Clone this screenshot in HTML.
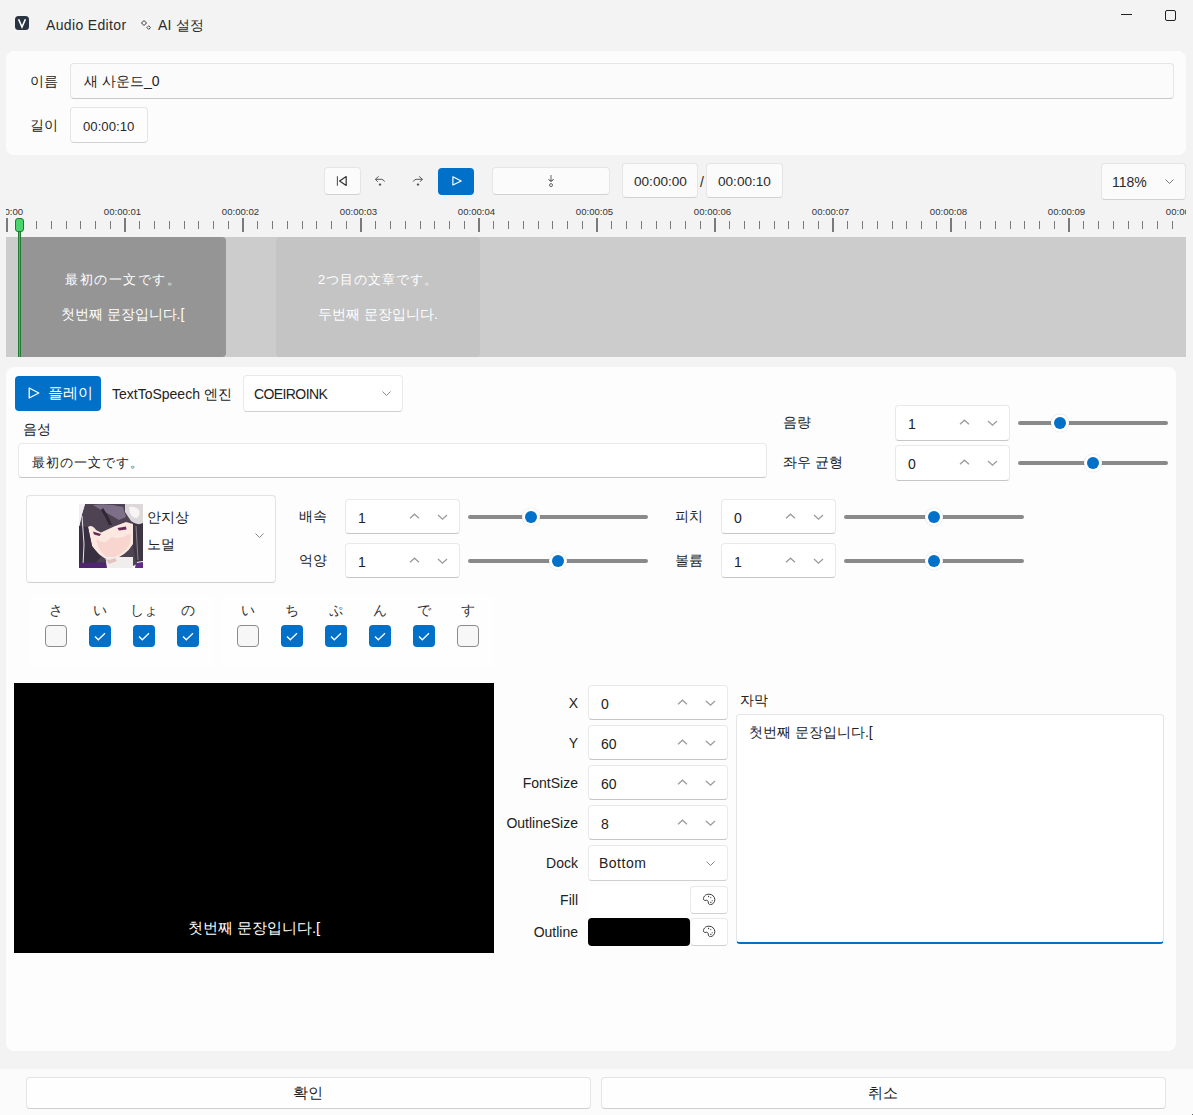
<!DOCTYPE html>
<html><head><meta charset="utf-8">
<style>
*{box-sizing:border-box;margin:0;padding:0}
html,body{width:1193px;height:1115px;overflow:hidden;background:#f3f3f3;font-family:"Liberation Sans",sans-serif;color:#222;font-size:14px}
.a{position:absolute}
.card{position:absolute;background:#fcfcfc;border-radius:8px}
.inp{position:absolute;background:#fbfbfb;border:1px solid #e5e5e5;border-bottom-color:#c9c9c9;border-radius:4px}
.btn{position:absolute;background:#fbfbfb;border:1px solid #e5e5e5;border-bottom-color:#d2d2d2;border-radius:4px}
.t{position:absolute;white-space:nowrap;line-height:1}
.acc{position:absolute;background:#0070c8;border-radius:4px}
svg{position:absolute;overflow:visible}
</style></head><body>
<!-- title bar -->
<div class="a" style="left:15px;top:16px;width:14px;height:14px;background:#2a3441;border-radius:3.5px"></div>
<svg style="left:15px;top:16px" width="14" height="14" viewBox="0 0 14 14"><path d="M3.6 3.2L7 11L10.4 3.2" fill="none" stroke="#fff" stroke-width="1.6" stroke-linejoin="miter"/></svg>
<div class="t" style="left:46px;top:18px;font-size:14px;color:#2b2b2b;letter-spacing:0.35px">Audio Editor</div>
<svg style="left:140px;top:19px" width="13" height="12" viewBox="0 0 13 12"><path d="M4 1.5L6.5 4L4 6.5L1.5 4Z" fill="none" stroke="#333" stroke-width="1"/><path d="M8.7 6.8L10.5 8.6L8.7 10.4L6.9 8.6Z" fill="none" stroke="#333" stroke-width="0.9"/></svg>
<div class="t" style="left:158px;top:18px;font-size:14px;color:#2b2b2b;letter-spacing:0.2px">AI 설정</div>
<div class="a" style="left:1121px;top:14px;width:11px;height:1px;background:#222"></div>
<div class="a" style="left:1165px;top:10px;width:11px;height:11px;border:1px solid #222;border-radius:2px"></div>

<!-- card 1 -->
<div class="card" style="left:6px;top:51px;width:1180px;height:104px"></div>
<div class="t" style="left:30px;top:74px;font-size:14px">이름</div>
<div class="inp" style="left:70px;top:63px;width:1104px;height:36px"></div>
<div class="t" style="left:84px;top:74px;font-size:14px">새 사운드_0</div>
<div class="t" style="left:30px;top:118px;font-size:14px">길이</div>
<div class="btn" style="left:70px;top:107px;width:78px;height:36px;background:#fdfdfd"></div>
<div class="t" style="left:83px;top:120px;font-size:13.2px;color:#2a2a2a">00:00:10</div>


<!-- transport -->
<div class="btn" style="left:324px;top:167px;width:37px;height:28px"></div>
<svg style="left:330px;top:170px" width="24" height="22" viewBox="330 170 24 22"><path d="M337.4 176.2V185.8" stroke="#555" stroke-width="1.1"/><path d="M346.2 176.6L339.6 181L346.2 185.4Z" fill="none" stroke="#333" stroke-width="1.2" stroke-linejoin="round"/></svg>
<svg style="left:370px;top:170px" width="60" height="22" viewBox="370 170 60 22"><path d="M378.6 176.4L375.4 179.3L377.8 181.8M375.4 179.3H381.6Q383.2 179.3 384.6 181.6" fill="none" stroke="#555" stroke-width="1"/><ellipse cx="380" cy="184.6" rx="1.3" ry="1.1" fill="#555"/><path d="M419.2 176.4L422.4 179.3L420 181.8M422.4 179.3H416.2Q414.6 179.3 413.2 181.6" fill="none" stroke="#555" stroke-width="1"/><ellipse cx="418" cy="184.6" rx="1.3" ry="1.1" fill="#555"/></svg>
<div class="acc" style="left:438px;top:168px;width:36px;height:27px"></div>
<svg style="left:444px;top:170px" width="24" height="22" viewBox="444 170 24 22"><path d="M452.9 176.8V185L461.2 181Z" fill="none" stroke="#fff" stroke-width="1.2" stroke-linejoin="round"/></svg>
<div class="btn" style="left:492px;top:167px;width:118px;height:28px"></div>
<svg style="left:540px;top:170px" width="22" height="22" viewBox="540 170 22 22"><path d="M551 175V181.2" stroke="#888" stroke-width="1.3"/><path d="M548.5 179.4L551 181.4L553.6 179.4" fill="none" stroke="#333" stroke-width="1"/><circle cx="551" cy="185.1" r="1.5" fill="none" stroke="#555" stroke-width="0.9"/></svg>
<div class="btn" style="left:622px;top:163px;width:76px;height:35px"></div>
<div class="t" style="left:634px;top:175px;font-size:13.6px;color:#2a2a2a">00:00:00</div>
<div class="t" style="left:700px;top:175px;font-size:14px;color:#2a2a2a">/</div>
<div class="btn" style="left:706px;top:163px;width:77px;height:35px"></div>
<div class="t" style="left:718px;top:175px;font-size:13.6px;color:#2a2a2a">00:00:10</div>
<div class="btn" style="left:1101px;top:163px;width:85px;height:37px"></div>
<div class="t" style="left:1112px;top:175px;font-size:14px;color:#2a2a2a">118%</div>
<svg style="left:1165px;top:179px" width="9" height="5" viewBox="0 0 9 5"><path d="M0.5 0.5L4.5 4.5L8.5 0.5" fill="none" stroke="#777" stroke-width="1"/></svg>

<!-- ruler -->
<div class="a" style="left:6px;top:200px;width:1180px;height:35px;overflow:hidden">
<div class="a" style="left:0.00px;top:18px;width:2px;height:14px;background:#7a7a7a"></div>
<div class="a" style="left:15.25px;top:21px;width:1px;height:8px;background:#7a7a7a"></div>
<div class="a" style="left:30.00px;top:21px;width:1px;height:8px;background:#7a7a7a"></div>
<div class="a" style="left:44.75px;top:21px;width:1px;height:8px;background:#7a7a7a"></div>
<div class="a" style="left:59.50px;top:21px;width:1px;height:8px;background:#7a7a7a"></div>
<div class="a" style="left:74.25px;top:21px;width:1px;height:8px;background:#7a7a7a"></div>
<div class="a" style="left:89.00px;top:21px;width:1px;height:8px;background:#7a7a7a"></div>
<div class="a" style="left:103.75px;top:21px;width:1px;height:8px;background:#7a7a7a"></div>
<div class="t" style="left:-26.50px;top:7px;width:50px;text-align:center;font-size:9.6px;color:#333">00:00:00</div>
<div class="a" style="left:118.00px;top:18px;width:2px;height:14px;background:#7a7a7a"></div>
<div class="a" style="left:133.25px;top:21px;width:1px;height:8px;background:#7a7a7a"></div>
<div class="a" style="left:148.00px;top:21px;width:1px;height:8px;background:#7a7a7a"></div>
<div class="a" style="left:162.75px;top:21px;width:1px;height:8px;background:#7a7a7a"></div>
<div class="a" style="left:177.50px;top:21px;width:1px;height:8px;background:#7a7a7a"></div>
<div class="a" style="left:192.25px;top:21px;width:1px;height:8px;background:#7a7a7a"></div>
<div class="a" style="left:207.00px;top:21px;width:1px;height:8px;background:#7a7a7a"></div>
<div class="a" style="left:221.75px;top:21px;width:1px;height:8px;background:#7a7a7a"></div>
<div class="t" style="left:91.50px;top:7px;width:50px;text-align:center;font-size:9.6px;color:#333">00:00:01</div>
<div class="a" style="left:236.00px;top:18px;width:2px;height:14px;background:#7a7a7a"></div>
<div class="a" style="left:251.25px;top:21px;width:1px;height:8px;background:#7a7a7a"></div>
<div class="a" style="left:266.00px;top:21px;width:1px;height:8px;background:#7a7a7a"></div>
<div class="a" style="left:280.75px;top:21px;width:1px;height:8px;background:#7a7a7a"></div>
<div class="a" style="left:295.50px;top:21px;width:1px;height:8px;background:#7a7a7a"></div>
<div class="a" style="left:310.25px;top:21px;width:1px;height:8px;background:#7a7a7a"></div>
<div class="a" style="left:325.00px;top:21px;width:1px;height:8px;background:#7a7a7a"></div>
<div class="a" style="left:339.75px;top:21px;width:1px;height:8px;background:#7a7a7a"></div>
<div class="t" style="left:209.50px;top:7px;width:50px;text-align:center;font-size:9.6px;color:#333">00:00:02</div>
<div class="a" style="left:354.00px;top:18px;width:2px;height:14px;background:#7a7a7a"></div>
<div class="a" style="left:369.25px;top:21px;width:1px;height:8px;background:#7a7a7a"></div>
<div class="a" style="left:384.00px;top:21px;width:1px;height:8px;background:#7a7a7a"></div>
<div class="a" style="left:398.75px;top:21px;width:1px;height:8px;background:#7a7a7a"></div>
<div class="a" style="left:413.50px;top:21px;width:1px;height:8px;background:#7a7a7a"></div>
<div class="a" style="left:428.25px;top:21px;width:1px;height:8px;background:#7a7a7a"></div>
<div class="a" style="left:443.00px;top:21px;width:1px;height:8px;background:#7a7a7a"></div>
<div class="a" style="left:457.75px;top:21px;width:1px;height:8px;background:#7a7a7a"></div>
<div class="t" style="left:327.50px;top:7px;width:50px;text-align:center;font-size:9.6px;color:#333">00:00:03</div>
<div class="a" style="left:472.00px;top:18px;width:2px;height:14px;background:#7a7a7a"></div>
<div class="a" style="left:487.25px;top:21px;width:1px;height:8px;background:#7a7a7a"></div>
<div class="a" style="left:502.00px;top:21px;width:1px;height:8px;background:#7a7a7a"></div>
<div class="a" style="left:516.75px;top:21px;width:1px;height:8px;background:#7a7a7a"></div>
<div class="a" style="left:531.50px;top:21px;width:1px;height:8px;background:#7a7a7a"></div>
<div class="a" style="left:546.25px;top:21px;width:1px;height:8px;background:#7a7a7a"></div>
<div class="a" style="left:561.00px;top:21px;width:1px;height:8px;background:#7a7a7a"></div>
<div class="a" style="left:575.75px;top:21px;width:1px;height:8px;background:#7a7a7a"></div>
<div class="t" style="left:445.50px;top:7px;width:50px;text-align:center;font-size:9.6px;color:#333">00:00:04</div>
<div class="a" style="left:590.00px;top:18px;width:2px;height:14px;background:#7a7a7a"></div>
<div class="a" style="left:605.25px;top:21px;width:1px;height:8px;background:#7a7a7a"></div>
<div class="a" style="left:620.00px;top:21px;width:1px;height:8px;background:#7a7a7a"></div>
<div class="a" style="left:634.75px;top:21px;width:1px;height:8px;background:#7a7a7a"></div>
<div class="a" style="left:649.50px;top:21px;width:1px;height:8px;background:#7a7a7a"></div>
<div class="a" style="left:664.25px;top:21px;width:1px;height:8px;background:#7a7a7a"></div>
<div class="a" style="left:679.00px;top:21px;width:1px;height:8px;background:#7a7a7a"></div>
<div class="a" style="left:693.75px;top:21px;width:1px;height:8px;background:#7a7a7a"></div>
<div class="t" style="left:563.50px;top:7px;width:50px;text-align:center;font-size:9.6px;color:#333">00:00:05</div>
<div class="a" style="left:708.00px;top:18px;width:2px;height:14px;background:#7a7a7a"></div>
<div class="a" style="left:723.25px;top:21px;width:1px;height:8px;background:#7a7a7a"></div>
<div class="a" style="left:738.00px;top:21px;width:1px;height:8px;background:#7a7a7a"></div>
<div class="a" style="left:752.75px;top:21px;width:1px;height:8px;background:#7a7a7a"></div>
<div class="a" style="left:767.50px;top:21px;width:1px;height:8px;background:#7a7a7a"></div>
<div class="a" style="left:782.25px;top:21px;width:1px;height:8px;background:#7a7a7a"></div>
<div class="a" style="left:797.00px;top:21px;width:1px;height:8px;background:#7a7a7a"></div>
<div class="a" style="left:811.75px;top:21px;width:1px;height:8px;background:#7a7a7a"></div>
<div class="t" style="left:681.50px;top:7px;width:50px;text-align:center;font-size:9.6px;color:#333">00:00:06</div>
<div class="a" style="left:826.00px;top:18px;width:2px;height:14px;background:#7a7a7a"></div>
<div class="a" style="left:841.25px;top:21px;width:1px;height:8px;background:#7a7a7a"></div>
<div class="a" style="left:856.00px;top:21px;width:1px;height:8px;background:#7a7a7a"></div>
<div class="a" style="left:870.75px;top:21px;width:1px;height:8px;background:#7a7a7a"></div>
<div class="a" style="left:885.50px;top:21px;width:1px;height:8px;background:#7a7a7a"></div>
<div class="a" style="left:900.25px;top:21px;width:1px;height:8px;background:#7a7a7a"></div>
<div class="a" style="left:915.00px;top:21px;width:1px;height:8px;background:#7a7a7a"></div>
<div class="a" style="left:929.75px;top:21px;width:1px;height:8px;background:#7a7a7a"></div>
<div class="t" style="left:799.50px;top:7px;width:50px;text-align:center;font-size:9.6px;color:#333">00:00:07</div>
<div class="a" style="left:944.00px;top:18px;width:2px;height:14px;background:#7a7a7a"></div>
<div class="a" style="left:959.25px;top:21px;width:1px;height:8px;background:#7a7a7a"></div>
<div class="a" style="left:974.00px;top:21px;width:1px;height:8px;background:#7a7a7a"></div>
<div class="a" style="left:988.75px;top:21px;width:1px;height:8px;background:#7a7a7a"></div>
<div class="a" style="left:1003.50px;top:21px;width:1px;height:8px;background:#7a7a7a"></div>
<div class="a" style="left:1018.25px;top:21px;width:1px;height:8px;background:#7a7a7a"></div>
<div class="a" style="left:1033.00px;top:21px;width:1px;height:8px;background:#7a7a7a"></div>
<div class="a" style="left:1047.75px;top:21px;width:1px;height:8px;background:#7a7a7a"></div>
<div class="t" style="left:917.50px;top:7px;width:50px;text-align:center;font-size:9.6px;color:#333">00:00:08</div>
<div class="a" style="left:1062.00px;top:18px;width:2px;height:14px;background:#7a7a7a"></div>
<div class="a" style="left:1077.25px;top:21px;width:1px;height:8px;background:#7a7a7a"></div>
<div class="a" style="left:1092.00px;top:21px;width:1px;height:8px;background:#7a7a7a"></div>
<div class="a" style="left:1106.75px;top:21px;width:1px;height:8px;background:#7a7a7a"></div>
<div class="a" style="left:1121.50px;top:21px;width:1px;height:8px;background:#7a7a7a"></div>
<div class="a" style="left:1136.25px;top:21px;width:1px;height:8px;background:#7a7a7a"></div>
<div class="a" style="left:1151.00px;top:21px;width:1px;height:8px;background:#7a7a7a"></div>
<div class="a" style="left:1165.75px;top:21px;width:1px;height:8px;background:#7a7a7a"></div>
<div class="t" style="left:1035.50px;top:7px;width:50px;text-align:center;font-size:9.6px;color:#333">00:00:09</div>
<div class="a" style="left:1180.00px;top:18px;width:2px;height:14px;background:#7a7a7a"></div>
<div class="a" style="left:1195.25px;top:21px;width:1px;height:8px;background:#7a7a7a"></div>
<div class="a" style="left:1210.00px;top:21px;width:1px;height:8px;background:#7a7a7a"></div>
<div class="a" style="left:1224.75px;top:21px;width:1px;height:8px;background:#7a7a7a"></div>
<div class="a" style="left:1239.50px;top:21px;width:1px;height:8px;background:#7a7a7a"></div>
<div class="a" style="left:1254.25px;top:21px;width:1px;height:8px;background:#7a7a7a"></div>
<div class="a" style="left:1269.00px;top:21px;width:1px;height:8px;background:#7a7a7a"></div>
<div class="a" style="left:1283.75px;top:21px;width:1px;height:8px;background:#7a7a7a"></div>
<div class="t" style="left:1153.50px;top:7px;width:50px;text-align:center;font-size:9.6px;color:#333">00:00:10</div>
</div>

<!-- track -->
<div class="a" style="left:6px;top:237px;width:1180px;height:120px;background:#cccccc"></div>
<div class="a" style="left:19px;top:237px;width:207px;height:120px;background:#959595;border-radius:0 4px 4px 0"></div>
<div class="a" style="left:276px;top:237px;width:204px;height:120px;background:#c4c4c4;border-radius:4px"></div>
<div class="t" style="left:19px;top:273px;width:207px;text-align:center;font-size:13px;letter-spacing:1.5px;text-indent:1px;color:#fff">最初の一文です。</div>
<div class="t" style="left:19px;top:307px;width:207px;text-align:center;font-size:14px;color:#fff">첫번째 문장입니다.[</div>
<div class="t" style="left:276px;top:273px;width:204px;text-align:center;font-size:13px;letter-spacing:1px;color:#fff">2つ目の文章です。</div>
<div class="t" style="left:276px;top:307px;width:204px;text-align:center;font-size:14px;color:#fff">두번째 문장입니다.</div>
<div class="a" style="left:18px;top:225px;width:3px;height:132px;background:#1f7a33"></div>
<div class="a" style="left:19px;top:225px;width:1px;height:132px;background:#3fbf5a"></div>
<div class="a" style="left:15px;top:218px;width:9px;height:14px;background:#4ad66d;border:1px solid #1f7a33;border-radius:3px"></div>


<!-- card 2 -->
<div class="card" style="left:6px;top:367px;width:1170px;height:684px;background:#fdfdfd"></div>
<div class="acc" style="left:15px;top:376px;width:86px;height:35px"></div>
<svg style="left:28px;top:387px" width="12" height="12" viewBox="0 0 12 12"><path d="M1.2 1V11L10.8 6Z" fill="none" stroke="#fff" stroke-width="1.3" stroke-linejoin="round"/></svg>
<div class="t" style="left:48px;top:385.5px;font-size:14.5px;font-weight:500;color:#fff">플레이</div>
<div class="t" style="left:112px;top:387px;font-size:14px;color:#222">TextToSpeech 엔진</div>
<div class="inp" style="background:#fff;border-color:#e9e9e9;border-bottom-color:#c6c6c6;left:243px;top:375px;width:160px;height:36.5px;border-bottom-color:#d0d0d0"></div>
<div class="t" style="left:254px;top:387px;font-size:14px;letter-spacing:-0.6px;color:#222">COEIROINK</div>
<svg style="left:382px;top:391px" width="9" height="5" viewBox="0 0 9 5"><path d="M0.5 0.5L4.5 4.5L8.5 0.5" fill="none" stroke="#8a8a8a" stroke-width="1"/></svg>

<div class="t" style="left:23px;top:422px;font-size:14px;color:#222">음성</div>
<div class="inp" style="background:#fff;border-color:#e9e9e9;border-bottom-color:#c6c6c6;left:18px;top:443px;width:749px;height:35px"></div>
<div class="t" style="left:32px;top:455.5px;font-size:13px;letter-spacing:1px;color:#222">最初の一文です。</div>

<div class="t" style="left:783px;top:415px;font-size:14px;color:#222">음량</div>
<div class="inp" style="background:#fff;border-color:#e9e9e9;border-bottom-color:#c6c6c6;left:895px;top:405px;width:115px;height:36px"></div>
<div class="t" style="left:908px;top:417.0px;font-size:14px;color:#222">1</div>
<svg style="left:959px;top:419.0px" width="11" height="6" viewBox="0 0 11 6"><path d="M1 5.3L5.5 1.2L10 5.3" fill="none" stroke="#9a9a9a" stroke-width="1.25"/></svg>
<svg style="left:987px;top:420.0px" width="11" height="6" viewBox="0 0 11 6"><path d="M1 1L5.5 5.2L10 1" fill="none" stroke="#9a9a9a" stroke-width="1.25"/></svg>
<div class="a" style="left:1018px;top:421px;width:150px;height:4px;background:#8a8a8a;border-radius:2px"></div>
<div class="a" style="left:1051px;top:414px;width:18px;height:18px;background:#fff;border-radius:50%;box-shadow:0 0 1px rgba(0,0,0,0.25)"></div>
<div class="a" style="left:1054px;top:417px;width:12px;height:12px;background:#0070c8;border-radius:50%"></div>

<div class="t" style="left:783px;top:455px;font-size:14px;color:#222">좌우 균형</div>
<div class="inp" style="background:#fff;border-color:#e9e9e9;border-bottom-color:#c6c6c6;left:895px;top:445px;width:115px;height:36px"></div>
<div class="t" style="left:908px;top:457.0px;font-size:14px;color:#222">0</div>
<svg style="left:959px;top:459.0px" width="11" height="6" viewBox="0 0 11 6"><path d="M1 5.3L5.5 1.2L10 5.3" fill="none" stroke="#9a9a9a" stroke-width="1.25"/></svg>
<svg style="left:987px;top:460.0px" width="11" height="6" viewBox="0 0 11 6"><path d="M1 1L5.5 5.2L10 1" fill="none" stroke="#9a9a9a" stroke-width="1.25"/></svg>
<div class="a" style="left:1018px;top:461px;width:150px;height:4px;background:#8a8a8a;border-radius:2px"></div>
<div class="a" style="left:1084px;top:454px;width:18px;height:18px;background:#fff;border-radius:50%;box-shadow:0 0 1px rgba(0,0,0,0.25)"></div>
<div class="a" style="left:1087px;top:457px;width:12px;height:12px;background:#0070c8;border-radius:50%"></div>


<div class="a" style="left:26px;top:495px;width:250px;height:88px;background:#fefefe;border:1px solid #e3e3e3;border-bottom-color:#d0d0d0;border-radius:4px"></div>
<!-- avatar -->
<svg style="left:79px;top:504px" width="64" height="64" viewBox="0 0 64 64">
<rect width="64" height="64" fill="#fbf9f9"/>
<path d="M6 0H50L54 12L56 20L58 60L50 64H0V24L3 10Z" fill="#4d4353"/>
<path d="M14 1Q28 -1 44 3L47 13L40 16Q30 10 22 6Z" fill="#7d6f87"/>
<path d="M24 4Q30 12 33 21L30 21Q26 12 22 6Z" fill="#2e2632"/>
<path d="M9 23Q13 20 17 26L22 28.5L35 22.5L47 18L54 20L54 40Q47 52 31 57Q18 51 13 42Z" fill="#fbe8e1"/>
<path d="M17 35Q22 39 27 38L33 33Q40 36 48 31L52 30L51 40Q45 50 31 55Q22 50 19 43Z" fill="#f8d6cf"/>
<path d="M14 27.5L22 30L20.5 32L15 30.5Z" fill="#6a2a58"/>
<path d="M38.5 24L47 22.5L47.5 25.5L40 26.5Z" fill="#6a2a58"/>
<path d="M0 22L9 23L13 42L22 53L12 64H0Z" fill="#383040"/>
<path d="M3 12L5 40L4 62" stroke="#e8e2ea" stroke-width="1" fill="none"/>
<path d="M0 0H6L3 10L0 22Z" fill="#f2eef2"/>
<path d="M54 19L56 14L64 17V57L57 58L54 42Z" fill="#3e3642"/>
<path d="M57 22L59 56" stroke="#8a8090" stroke-width="1" fill="none"/>
<path d="M46 0H64V19Q58 22 52 17L46 8Z" fill="#dcd8d9"/>
<path d="M50 3Q56 2 60 6Q62 11 58 14Q53 14 51 9Z" fill="#f6f4f4"/>
<path d="M27 53H54V64H27Z" fill="#f1eded"/>
<path d="M0 59L27 58L28 64H0Z" fill="#4e2670"/>
<path d="M57 59L64 58V64H56Z" fill="#5e2c84"/>
<path d="M26 55Q31 57 36 54L38 57L30 60Z" fill="#e0c4c0"/>
</svg>
<div class="t" style="left:147px;top:510px;font-size:14px;color:#222">안지상</div>
<div class="t" style="left:147px;top:537px;font-size:14px;color:#222">노멀</div>
<svg style="left:255px;top:533px" width="9" height="5" viewBox="0 0 9 5"><path d="M0.5 0.5L4.5 4.5L8.5 0.5" fill="none" stroke="#8a8a8a" stroke-width="1"/></svg>


<div class="t" style="left:299px;top:509px;font-size:14px;color:#222">배속</div>
<div class="inp" style="background:#fff;border-color:#e9e9e9;border-bottom-color:#c6c6c6;left:345px;top:499px;width:115px;height:35px"></div>
<div class="t" style="left:358px;top:510.5px;font-size:14px;color:#222">1</div>
<svg style="left:409px;top:512.5px" width="11" height="6" viewBox="0 0 11 6"><path d="M1 5.3L5.5 1.2L10 5.3" fill="none" stroke="#9a9a9a" stroke-width="1.25"/></svg>
<svg style="left:437px;top:513.5px" width="11" height="6" viewBox="0 0 11 6"><path d="M1 1L5.5 5.2L10 1" fill="none" stroke="#9a9a9a" stroke-width="1.25"/></svg>
<div class="a" style="left:468px;top:515px;width:180px;height:4px;background:#8a8a8a;border-radius:2px"></div>
<div class="a" style="left:522px;top:508px;width:18px;height:18px;background:#fff;border-radius:50%;box-shadow:0 0 1px rgba(0,0,0,0.25)"></div>
<div class="a" style="left:525px;top:511px;width:12px;height:12px;background:#0070c8;border-radius:50%"></div>

<div class="t" style="left:299px;top:553px;font-size:14px;color:#222">억양</div>
<div class="inp" style="background:#fff;border-color:#e9e9e9;border-bottom-color:#c6c6c6;left:345px;top:543px;width:115px;height:35px"></div>
<div class="t" style="left:358px;top:554.5px;font-size:14px;color:#222">1</div>
<svg style="left:409px;top:556.5px" width="11" height="6" viewBox="0 0 11 6"><path d="M1 5.3L5.5 1.2L10 5.3" fill="none" stroke="#9a9a9a" stroke-width="1.25"/></svg>
<svg style="left:437px;top:557.5px" width="11" height="6" viewBox="0 0 11 6"><path d="M1 1L5.5 5.2L10 1" fill="none" stroke="#9a9a9a" stroke-width="1.25"/></svg>
<div class="a" style="left:468px;top:559px;width:180px;height:4px;background:#8a8a8a;border-radius:2px"></div>
<div class="a" style="left:549px;top:552px;width:18px;height:18px;background:#fff;border-radius:50%;box-shadow:0 0 1px rgba(0,0,0,0.25)"></div>
<div class="a" style="left:552px;top:555px;width:12px;height:12px;background:#0070c8;border-radius:50%"></div>

<div class="t" style="left:675px;top:509px;font-size:14px;color:#222">피치</div>
<div class="inp" style="background:#fff;border-color:#e9e9e9;border-bottom-color:#c6c6c6;left:721px;top:499px;width:115px;height:35px"></div>
<div class="t" style="left:734px;top:510.5px;font-size:14px;color:#222">0</div>
<svg style="left:785px;top:512.5px" width="11" height="6" viewBox="0 0 11 6"><path d="M1 5.3L5.5 1.2L10 5.3" fill="none" stroke="#9a9a9a" stroke-width="1.25"/></svg>
<svg style="left:813px;top:513.5px" width="11" height="6" viewBox="0 0 11 6"><path d="M1 1L5.5 5.2L10 1" fill="none" stroke="#9a9a9a" stroke-width="1.25"/></svg>
<div class="a" style="left:844px;top:515px;width:180px;height:4px;background:#8a8a8a;border-radius:2px"></div>
<div class="a" style="left:925px;top:508px;width:18px;height:18px;background:#fff;border-radius:50%;box-shadow:0 0 1px rgba(0,0,0,0.25)"></div>
<div class="a" style="left:928px;top:511px;width:12px;height:12px;background:#0070c8;border-radius:50%"></div>

<div class="t" style="left:675px;top:553px;font-size:14px;color:#222">볼륨</div>
<div class="inp" style="background:#fff;border-color:#e9e9e9;border-bottom-color:#c6c6c6;left:721px;top:543px;width:115px;height:35px"></div>
<div class="t" style="left:734px;top:554.5px;font-size:14px;color:#222">1</div>
<svg style="left:785px;top:556.5px" width="11" height="6" viewBox="0 0 11 6"><path d="M1 5.3L5.5 1.2L10 5.3" fill="none" stroke="#9a9a9a" stroke-width="1.25"/></svg>
<svg style="left:813px;top:557.5px" width="11" height="6" viewBox="0 0 11 6"><path d="M1 1L5.5 5.2L10 1" fill="none" stroke="#9a9a9a" stroke-width="1.25"/></svg>
<div class="a" style="left:844px;top:559px;width:180px;height:4px;background:#8a8a8a;border-radius:2px"></div>
<div class="a" style="left:925px;top:552px;width:18px;height:18px;background:#fff;border-radius:50%;box-shadow:0 0 1px rgba(0,0,0,0.25)"></div>
<div class="a" style="left:928px;top:555px;width:12px;height:12px;background:#0070c8;border-radius:50%"></div>


<!-- checkbox groups -->
<div class="a" style="left:30px;top:594.5px;width:184px;height:72.5px;background:#fefefe;border-radius:3px"></div>
<div class="a" style="left:221px;top:594.5px;width:273px;height:72.5px;background:#fefefe;border-radius:3px"></div>
<div class="t" style="left:31px;top:603px;width:50px;text-align:center;font-size:14px;color:#333">さ</div>
<div class="a" style="left:45px;top:625px;width:22px;height:22px;background:#f7f7f7;border:1px solid #8a8a8a;border-radius:4px"></div>
<div class="t" style="left:75px;top:603px;width:50px;text-align:center;font-size:14px;color:#333">い</div>
<div class="acc" style="left:89px;top:625px;width:22px;height:22px"></div>
<svg style="left:94px;top:632px" width="12" height="9" viewBox="0 0 12 9"><path d="M1 4.5L4.3 7.8L11 1.2" fill="none" stroke="#fff" stroke-width="1.4"/></svg>
<div class="t" style="left:119px;top:603px;width:50px;text-align:center;font-size:14px;color:#333">しょ</div>
<div class="acc" style="left:133px;top:625px;width:22px;height:22px"></div>
<svg style="left:138px;top:632px" width="12" height="9" viewBox="0 0 12 9"><path d="M1 4.5L4.3 7.8L11 1.2" fill="none" stroke="#fff" stroke-width="1.4"/></svg>
<div class="t" style="left:163px;top:603px;width:50px;text-align:center;font-size:14px;color:#333">の</div>
<div class="acc" style="left:177px;top:625px;width:22px;height:22px"></div>
<svg style="left:182px;top:632px" width="12" height="9" viewBox="0 0 12 9"><path d="M1 4.5L4.3 7.8L11 1.2" fill="none" stroke="#fff" stroke-width="1.4"/></svg>
<div class="t" style="left:223px;top:603px;width:50px;text-align:center;font-size:14px;color:#333">い</div>
<div class="a" style="left:237px;top:625px;width:22px;height:22px;background:#f7f7f7;border:1px solid #8a8a8a;border-radius:4px"></div>
<div class="t" style="left:267px;top:603px;width:50px;text-align:center;font-size:14px;color:#333">ち</div>
<div class="acc" style="left:281px;top:625px;width:22px;height:22px"></div>
<svg style="left:286px;top:632px" width="12" height="9" viewBox="0 0 12 9"><path d="M1 4.5L4.3 7.8L11 1.2" fill="none" stroke="#fff" stroke-width="1.4"/></svg>
<div class="t" style="left:311px;top:603px;width:50px;text-align:center;font-size:14px;color:#333">ぷ</div>
<div class="acc" style="left:325px;top:625px;width:22px;height:22px"></div>
<svg style="left:330px;top:632px" width="12" height="9" viewBox="0 0 12 9"><path d="M1 4.5L4.3 7.8L11 1.2" fill="none" stroke="#fff" stroke-width="1.4"/></svg>
<div class="t" style="left:355px;top:603px;width:50px;text-align:center;font-size:14px;color:#333">ん</div>
<div class="acc" style="left:369px;top:625px;width:22px;height:22px"></div>
<svg style="left:374px;top:632px" width="12" height="9" viewBox="0 0 12 9"><path d="M1 4.5L4.3 7.8L11 1.2" fill="none" stroke="#fff" stroke-width="1.4"/></svg>
<div class="t" style="left:399px;top:603px;width:50px;text-align:center;font-size:14px;color:#333">で</div>
<div class="acc" style="left:413px;top:625px;width:22px;height:22px"></div>
<svg style="left:418px;top:632px" width="12" height="9" viewBox="0 0 12 9"><path d="M1 4.5L4.3 7.8L11 1.2" fill="none" stroke="#fff" stroke-width="1.4"/></svg>
<div class="t" style="left:443px;top:603px;width:50px;text-align:center;font-size:14px;color:#333">す</div>
<div class="a" style="left:457px;top:625px;width:22px;height:22px;background:#f7f7f7;border:1px solid #8a8a8a;border-radius:4px"></div>

<!-- preview -->
<div class="a" style="left:14px;top:683px;width:480px;height:270px;background:#000"></div>
<div class="t" style="left:14px;top:920px;width:480px;text-align:center;font-size:15px;color:#fff">첫번째 문장입니다.[</div>

<!-- properties -->
<div class="t" style="left:478px;top:696px;width:100px;text-align:right;font-size:14px;color:#222">X</div>
<div class="inp" style="background:#fff;border-color:#e9e9e9;border-bottom-color:#c6c6c6;left:588px;top:685px;width:140px;height:35px"></div>
<div class="t" style="left:601px;top:696.5px;font-size:14px;color:#222">0</div>
<svg style="left:677px;top:698.5px" width="11" height="6" viewBox="0 0 11 6"><path d="M1 5.3L5.5 1.2L10 5.3" fill="none" stroke="#9a9a9a" stroke-width="1.25"/></svg>
<svg style="left:705px;top:699.5px" width="11" height="6" viewBox="0 0 11 6"><path d="M1 1L5.5 5.2L10 1" fill="none" stroke="#9a9a9a" stroke-width="1.25"/></svg>
<div class="t" style="left:478px;top:736px;width:100px;text-align:right;font-size:14px;color:#222">Y</div>
<div class="inp" style="background:#fff;border-color:#e9e9e9;border-bottom-color:#c6c6c6;left:588px;top:725px;width:140px;height:35px"></div>
<div class="t" style="left:601px;top:736.5px;font-size:14px;color:#222">60</div>
<svg style="left:677px;top:738.5px" width="11" height="6" viewBox="0 0 11 6"><path d="M1 5.3L5.5 1.2L10 5.3" fill="none" stroke="#9a9a9a" stroke-width="1.25"/></svg>
<svg style="left:705px;top:739.5px" width="11" height="6" viewBox="0 0 11 6"><path d="M1 1L5.5 5.2L10 1" fill="none" stroke="#9a9a9a" stroke-width="1.25"/></svg>
<div class="t" style="left:478px;top:776px;width:100px;text-align:right;font-size:14px;color:#222">FontSize</div>
<div class="inp" style="background:#fff;border-color:#e9e9e9;border-bottom-color:#c6c6c6;left:588px;top:765px;width:140px;height:35px"></div>
<div class="t" style="left:601px;top:776.5px;font-size:14px;color:#222">60</div>
<svg style="left:677px;top:778.5px" width="11" height="6" viewBox="0 0 11 6"><path d="M1 5.3L5.5 1.2L10 5.3" fill="none" stroke="#9a9a9a" stroke-width="1.25"/></svg>
<svg style="left:705px;top:779.5px" width="11" height="6" viewBox="0 0 11 6"><path d="M1 1L5.5 5.2L10 1" fill="none" stroke="#9a9a9a" stroke-width="1.25"/></svg>
<div class="t" style="left:478px;top:816px;width:100px;text-align:right;font-size:14px;color:#222">OutlineSize</div>
<div class="inp" style="background:#fff;border-color:#e9e9e9;border-bottom-color:#c6c6c6;left:588px;top:805px;width:140px;height:35px"></div>
<div class="t" style="left:601px;top:816.5px;font-size:14px;color:#222">8</div>
<svg style="left:677px;top:818.5px" width="11" height="6" viewBox="0 0 11 6"><path d="M1 5.3L5.5 1.2L10 5.3" fill="none" stroke="#9a9a9a" stroke-width="1.25"/></svg>
<svg style="left:705px;top:819.5px" width="11" height="6" viewBox="0 0 11 6"><path d="M1 1L5.5 5.2L10 1" fill="none" stroke="#9a9a9a" stroke-width="1.25"/></svg>
<div class="t" style="left:478px;top:856px;width:100px;text-align:right;font-size:14px;color:#222">Dock</div>
<div class="inp" style="background:#fff;border-color:#e9e9e9;border-bottom-color:#c6c6c6;left:588px;top:845px;width:140px;height:36px;border-bottom-color:#d0d0d0"></div>
<div class="t" style="left:599px;top:856px;font-size:14px;letter-spacing:0.5px;color:#222">Bottom</div>
<svg style="left:706px;top:861px" width="9" height="5" viewBox="0 0 9 5"><path d="M0.5 0.5L4.5 4.5L8.5 0.5" fill="none" stroke="#8a8a8a" stroke-width="1"/></svg>

<div class="t" style="left:478px;top:893px;width:100px;text-align:right;font-size:14px;color:#222">Fill</div>
<div class="a" style="left:588px;top:886px;width:102px;height:28px;background:#fff"></div>
<div class="btn" style="left:690px;top:886px;width:38px;height:28px;background:#fff;border-color:#e9e9e9;border-bottom-color:#d0d0d0"></div>
<div class="t" style="left:478px;top:925px;width:100px;text-align:right;font-size:14px;color:#222">Outline</div>
<div class="a" style="left:588px;top:918px;width:102px;height:28px;background:#000;border-radius:4px"></div>
<div class="btn" style="left:690px;top:918px;width:38px;height:28px;background:#fff;border-color:#e9e9e9;border-bottom-color:#d0d0d0"></div>

<svg style="left:698px;top:888px" width="22" height="24" viewBox="698 888 22 24"><path d="M704.5 900.4C703 900 703.2 897.5 704.5 896C705.8 894.5 707.5 894.2 709 894.2C712.5 894.2 714.8 896.8 714.8 899.6C714.8 902.6 712.6 904.6 710.4 904.6C709 904.6 708.2 903.7 708.2 902C708.2 900.9 707.6 900.3 706.6 900.3Z" fill="none" stroke="#333" stroke-width="0.95"/><circle cx="708.6" cy="896.5" r="0.65" fill="#333"/><circle cx="710.8" cy="897.6" r="0.6" fill="#444"/><circle cx="712.2" cy="900.8" r="0.6" fill="#444"/><circle cx="710.8" cy="902.4" r="0.65" fill="#333"/></svg>
<svg style="left:698px;top:920px" width="22" height="24" viewBox="698 888 22 24"><path d="M704.5 900.4C703 900 703.2 897.5 704.5 896C705.8 894.5 707.5 894.2 709 894.2C712.5 894.2 714.8 896.8 714.8 899.6C714.8 902.6 712.6 904.6 710.4 904.6C709 904.6 708.2 903.7 708.2 902C708.2 900.9 707.6 900.3 706.6 900.3Z" fill="none" stroke="#333" stroke-width="0.95"/><circle cx="708.6" cy="896.5" r="0.65" fill="#333"/><circle cx="710.8" cy="897.6" r="0.6" fill="#444"/><circle cx="712.2" cy="900.8" r="0.6" fill="#444"/><circle cx="710.8" cy="902.4" r="0.65" fill="#333"/></svg>
<div class="t" style="left:740px;top:693px;font-size:14px;color:#222">자막</div>
<div class="a" style="left:736px;top:714px;width:428px;height:230px;background:#fff;border:1px solid #e5e5e5;border-bottom:2px solid #0070c8;border-radius:4px"></div>
<div class="t" style="left:749px;top:725px;font-size:14px;color:#222">첫번째 문장입니다.[</div>

<!-- footer -->
<div class="a" style="left:0;top:1069px;width:1193px;height:46px;background:#fbfbfb"></div>
<div class="btn" style="left:26px;top:1077px;width:565px;height:32px;background:#fefefe;border-bottom-color:#cfcfcf"></div>
<div class="t" style="left:25px;top:1085.5px;width:565px;text-align:center;font-size:14.5px;color:#222">확인</div>
<div class="btn" style="left:601px;top:1077px;width:565px;height:32px;background:#fefefe;border-bottom-color:#cfcfcf"></div>
<div class="t" style="left:600px;top:1085.5px;width:565px;text-align:center;font-size:14.5px;color:#222">취소</div>

<div class="a" style="left:1192px;top:1114px;width:1px;height:1px;background:#666"></div>
</body></html>
